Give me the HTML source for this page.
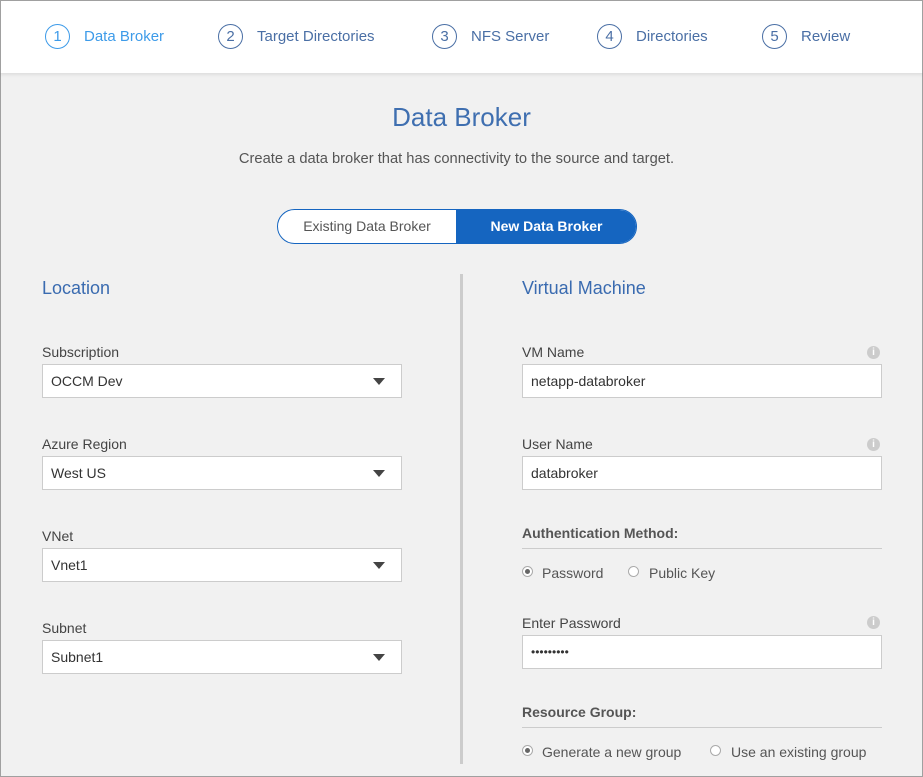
<!DOCTYPE html><html><head><style>
*{margin:0;padding:0;box-sizing:border-box}
body{width:923px;height:777px;background:#f1f1f1;font-family:"Liberation Sans",sans-serif;position:relative;overflow:hidden;border:1px solid #a0a0a0}
.a{position:absolute;white-space:nowrap}
.hdr{position:absolute;left:-1px;top:-1px;width:923px;height:73px;background:#fff;box-shadow:0 2px 3px rgba(0,0,0,.08);border:1px solid #a0a0a0;border-bottom:none}
.c{position:absolute;top:23px;width:25px;height:25px;border:1.5px solid #4a6fa5;border-radius:50%;font-size:15px;color:#4a6fa5;text-align:center;line-height:24px}
.st{position:absolute;top:27px;font-size:15px;color:#4a6fa5}
.lab{font-size:14px;color:#444}
.sel{position:absolute;width:360px;height:34px;background:#fff;border:1px solid #ccc;font-size:14px;color:#333;padding-left:8px;line-height:32px}
.sel .ar{position:absolute;right:16px;top:13px;border-left:6px solid transparent;border-right:6px solid transparent;border-top:7px solid #444}
.h{font-size:18px;color:#3a6bb0}
.i{position:absolute;width:13px;height:13px;border-radius:50%;background:#ccc;color:#fff;font-size:10px;text-align:center;line-height:13px;font-weight:bold}
.sec{font-size:14px;font-weight:bold;color:#555}
.rad{position:absolute;width:11px;height:11px;border-radius:50%;border:1px solid #aaa;background:#fff}
.rad.on::after{content:"";position:absolute;left:2px;top:2px;width:5px;height:5px;border-radius:50%;background:#666}
.rl{font-size:14px;color:#555}
</style></head><body>
<div class="hdr">
<div class="c" style="left:44px;border-color:#3d9be9;color:#3d9be9">1</div><div class="st" style="left:83px;color:#3d9be9">Data Broker</div>
<div class="c" style="left:217px">2</div><div class="st" style="left:256px">Target Directories</div>
<div class="c" style="left:431px">3</div><div class="st" style="left:470px">NFS Server</div>
<div class="c" style="left:596px">4</div><div class="st" style="left:635px">Directories</div>
<div class="c" style="left:761px">5</div><div class="st" style="left:800px">Review</div>
</div>
<div class="a" style="left:-1px;width:923px;text-align:center;top:101px;font-size:26px;color:#3f6fb0">Data Broker</div>
<div class="a" style="left:-1px;width:913px;text-align:center;top:150px;font-size:14.7px;color:#555">Create a data broker that has connectivity to the source and target.</div>
<div class="a" style="left:276px;top:208px;width:360px;height:35px;border:1px solid #1565c0;border-radius:18px;overflow:hidden;background:#fff">
<div class="a" style="left:0;top:0;width:178px;height:33px;line-height:33px;text-align:center;font-size:14px;color:#555">Existing Data Broker</div>
<div class="a" style="left:178px;top:0;width:181px;height:33px;line-height:33px;text-align:center;font-size:14px;color:#fff;background:#1565c0;font-weight:bold">New Data Broker</div>
</div>
<div class="a" style="left:459px;top:273px;width:3px;height:490px;background:#ccc"></div>
<div class="a h" style="left:41px;top:277px">Location</div>
<div class="a lab" style="left:41px;top:343px">Subscription</div><div class="sel" style="left:41px;top:363px">OCCM Dev<span class="ar"></span></div>
<div class="a lab" style="left:41px;top:435px">Azure Region</div><div class="sel" style="left:41px;top:455px">West US<span class="ar"></span></div>
<div class="a lab" style="left:41px;top:527px">VNet</div><div class="sel" style="left:41px;top:547px">Vnet1<span class="ar"></span></div>
<div class="a lab" style="left:41px;top:619px">Subnet</div><div class="sel" style="left:41px;top:639px">Subnet1<span class="ar"></span></div>
<div class="a h" style="left:521px;top:277px">Virtual Machine</div>
<div class="a lab" style="left:521px;top:343px">VM Name</div><div class="i" style="left:866px;top:345px">i</div>
<div class="sel" style="left:521px;top:363px">netapp-databroker</div>
<div class="a lab" style="left:521px;top:435px">User Name</div><div class="i" style="left:866px;top:437px">i</div>
<div class="sel" style="left:521px;top:455px">databroker</div>
<div class="a sec" style="left:521px;top:524px">Authentication Method:</div>
<div class="a" style="left:521px;top:547px;width:360px;height:1px;background:#ccc"></div>
<div class="rad on" style="left:521px;top:565px"></div><div class="a rl" style="left:541px;top:564px">Password</div>
<div class="rad" style="left:627px;top:565px"></div><div class="a rl" style="left:648px;top:564px">Public Key</div>
<div class="a lab" style="left:521px;top:614px">Enter Password</div><div class="i" style="left:866px;top:615px">i</div>
<div class="sel" style="left:521px;top:634px;font-size:12px">•••••••••</div>
<div class="a sec" style="left:521px;top:703px">Resource Group:</div>
<div class="a" style="left:521px;top:726px;width:360px;height:1px;background:#ccc"></div>
<div class="rad on" style="left:521px;top:744px"></div><div class="a rl" style="left:541px;top:743px">Generate a new group</div>
<div class="rad" style="left:709px;top:744px"></div><div class="a rl" style="left:730px;top:743px">Use an existing group</div>
</body></html>
